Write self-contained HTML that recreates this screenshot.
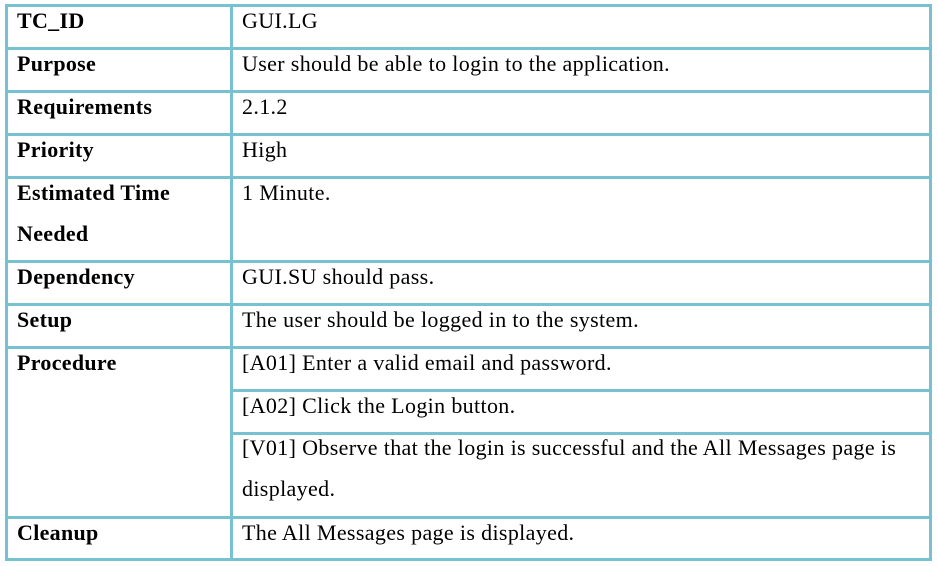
<!DOCTYPE html><html><head><style>
body{margin:0;width:937px;height:566px;background:#fff;position:relative;overflow:hidden;font-family:"Liberation Serif",serif;font-size:22px;letter-spacing:0.35px;color:#000}
.h,.v{position:absolute;background:#78c1d1}
.h{height:3px}.v{width:3px}
.t{position:absolute;line-height:41px;white-space:nowrap;margin-top:-1px}
.b{font-weight:bold;left:17px;letter-spacing:0.3px}.r{left:242px}
</style></head><body>
<div class="h" style="left:5px;width:927px;top:4px"></div>
<div class="h" style="left:5px;width:927px;top:47px"></div>
<div class="h" style="left:5px;width:927px;top:90px"></div>
<div class="h" style="left:5px;width:927px;top:133px"></div>
<div class="h" style="left:5px;width:927px;top:176px"></div>
<div class="h" style="left:5px;width:927px;top:260px"></div>
<div class="h" style="left:5px;width:927px;top:303px"></div>
<div class="h" style="left:5px;width:927px;top:346px"></div>
<div class="h" style="left:231px;width:701px;top:389px"></div>
<div class="h" style="left:231px;width:701px;top:432px"></div>
<div class="h" style="left:5px;width:927px;top:516px"></div>
<div class="h" style="left:5px;width:927px;top:558px"></div>
<div class="v" style="left:5px;top:4px;height:557px"></div>
<div class="v" style="left:230px;top:4px;height:557px"></div>
<div class="v" style="left:929px;top:4px;height:557px"></div>

<div class="t b" style="top:1px">TC_ID</div><div class="t r" style="top:1px">GUI.LG</div>
<div class="t b" style="top:44px">Purpose</div><div class="t r" style="top:44px">User should be able to login to the application.</div>
<div class="t b" style="top:87px">Requirements</div><div class="t r" style="top:87px">2.1.2</div>
<div class="t b" style="top:130px">Priority</div><div class="t r" style="top:130px">High</div>
<div class="t b" style="top:173px">Estimated Time<br>Needed</div><div class="t r" style="top:173px">1 Minute.</div>
<div class="t b" style="top:257px">Dependency</div><div class="t r" style="top:257px">GUI.SU should pass.</div>
<div class="t b" style="top:300px">Setup</div><div class="t r" style="top:300px">The user should be logged in to the system.</div>
<div class="t b" style="top:343px">Procedure</div><div class="t r" style="top:343px">[A01] Enter a valid email and password.</div>
<div class="t r" style="top:386px">[A02] Click the Login button.</div>
<div class="t r" style="top:428px">[V01] Observe that the login is successful and the All Messages page is<br>displayed.</div>
<div class="t b" style="top:513px">Cleanup</div><div class="t r" style="top:513px">The All Messages page is displayed.</div>
</body></html>
